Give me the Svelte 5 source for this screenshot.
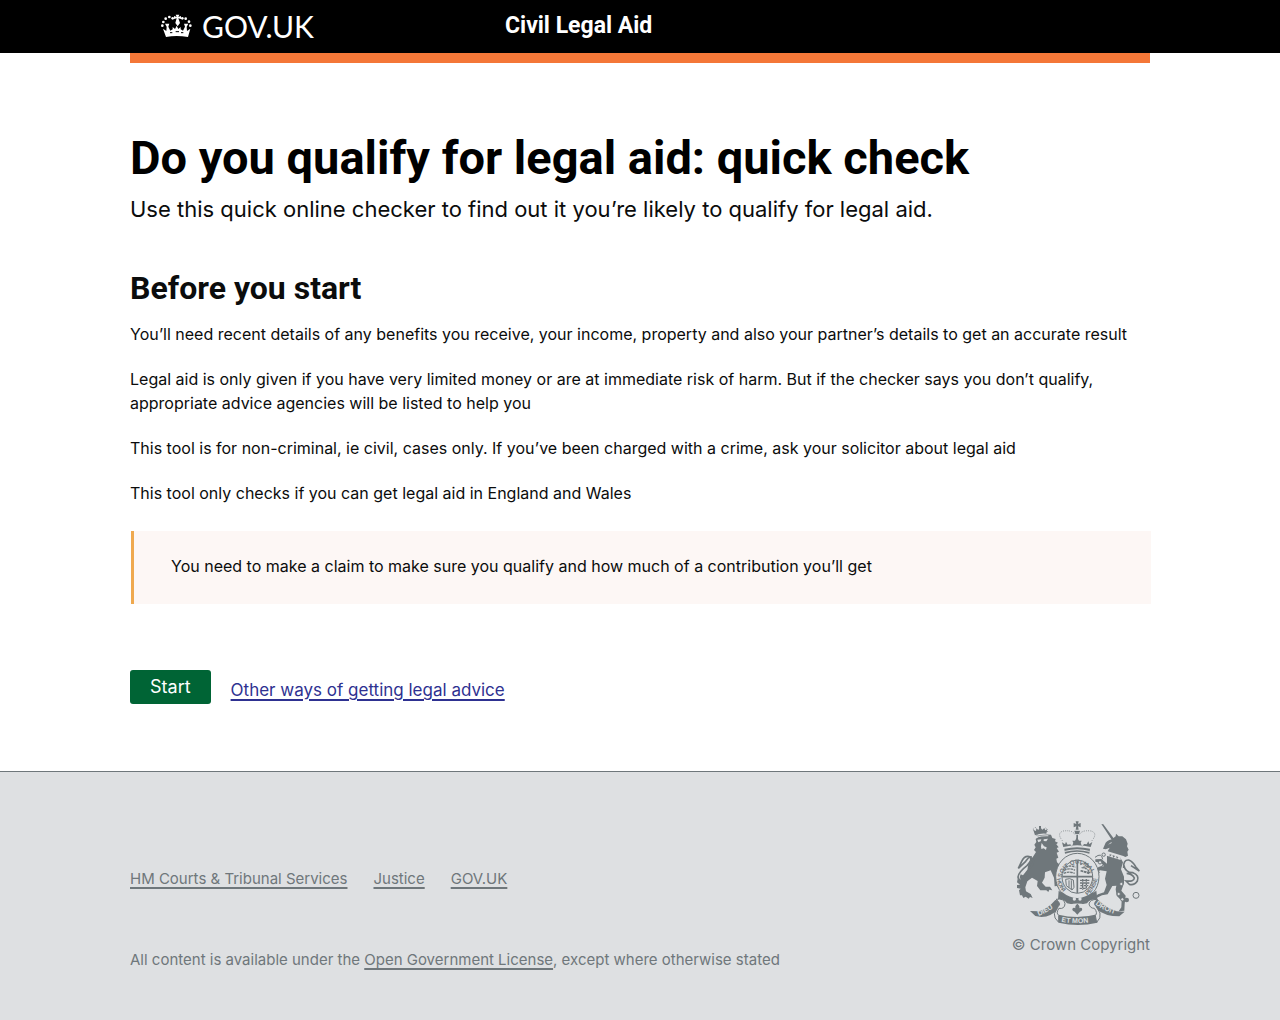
<script lang="ts">
  const details = [
    'You’ll need recent details of any benefits you receive, your income, property and also your partner’s details to get an accurate result',
    'Legal aid is only given if you have very limited money or are at immediate risk of harm. But if the checker says you don’t qualify, appropriate advice agencies will be listed to help you',
    'This tool is for non-criminal, ie civil, cases only. If you’ve been charged with a crime, ask your solicitor about legal aid',
    'This tool only checks if you can get legal aid in England and Wales',
  ];
  const footerLinks = ['HM Courts & Tribunal Services', 'Justice', 'GOV.UK'];
</script>

<header class="top">
  <div class="wrap top-inner">
    <a class="brand" href="#home">
      <svg class="crown" viewBox="33 42 93 69" aria-hidden="true">
        <g fill="currentColor">
          <path d="M77 44h11l-3 7 8-3v9l-8-2 5 14-7 10-7-10 4-14-8 2v-9l8 3z" />
          <circle cx="68" cy="55" r="4" /><circle cx="58" cy="51" r="4" /><circle cx="47" cy="56" r="4" /><circle cx="40" cy="66" r="4" /><circle cx="37" cy="77" r="4" />
          <circle cx="97" cy="55" r="4" /><circle cx="107" cy="56" r="4" /><circle cx="117" cy="65" r="4" /><circle cx="121" cy="77" r="4" />
          <path d="M39 86l10 7 1-13-5-9h13l-3 9 6 12 7-4v-7l7 6 5-10 5 10 7-6v7l7 4 6-12-3-9h13l-5 9 1 13 10-7-7 25q-35-6-66 0z" />
        </g>
        <path d="M60 98h7m26 0h7M77 95h10" fill="none" stroke="#000" stroke-width="3" />
      </svg>
      <span>GOV.UK</span>
    </a>
    <a class="service" href="#service">Civil Legal Aid</a>
  </div>
</header>
<div class="wrap"><div class="stripe"></div></div>

<main class="wrap">
  <h1>Do you qualify for legal aid: quick check</h1>
  <p class="lede">Use this quick online checker to find out it you’re likely to qualify for legal aid.</p>
  <h2>Before you start</h2>
  {#each details as text}
    <p>{text}</p>
  {/each}
  <aside>You need to make a claim to make sure you qualify and how much of a contribution you’ll get</aside>
  <div class="actions">
    <button type="button">Start</button>
    <a href="#advice">Other ways of getting legal advice</a>
  </div>
</main>

<footer>
  <div class="wrap foot">
    <div class="foot-text">
      <nav>
        {#each footerLinks as label}
          <a href="#footer">{label}</a>
        {/each}
      </nav>
      <p class="licence">All content is available under the <a href="#licence">Open Government License</a>, except where otherwise stated</p>
    </div>
    <div class="copyright">
      <svg class="arms" viewBox="48 33 372 312" aria-hidden="true">
        <defs>
          <path id="garter-top" d="M185 203A48 52 0 0 1 279 203" />
          <path id="garter-left" d="M170 206Q176 244 216 264" />
          <path id="garter-right" d="M262 258Q291 234 295 188" />
          <path id="scroll-left" d="M116 318Q146 306 178 280" />
          <path id="scroll-right" d="M286 283Q314 306 364 318" />
          <path id="scroll-mid" d="M184 335Q232 345 290 333" />
        </defs>
        <g fill="currentColor">
          <!-- royal crown -->
          <path d="M227 34h9l-2 8 8-3v13l-8-3 2 10h-9l2-10-8 3V39l8 3zM223 62h17l-3 10h-11zM229 74h5v19h-5z" />
          <path d="M190 112l-4-15 9 6 3-8 5 9 8-1 5 7 4-12-3-6h8l6-10 6 10h8l-3 6 4 12 6-8 8 1 5-9 3 8 9-6-5 15q-40-10-82 0zM193 116q38-9 77 0l-2 15q-36-12-73 0z" />
          <!-- lion -->
          <path d="M109 78q20-6 44-4l4 10 10 3-2 7 9 4-5 5 7 9-6 2 7 11-7 3 5 15-6 3 2 11 9 8 5 25-5 18 5 20-8 8-6-8-7 1-2-26-10-22-17 6-1 16-8 15 11 12 13 0 7 11-9-2-3 7-6-5-18 0-10-13 2-15-17-10-14 11-6 18 2 12 14 8 6 12-8-3-4 5-9-6-7 4-4-8-6 0-3-15 5-5-11-2 0-9 9-1-9-7 2-10 10 4-4-9 3-9 7 3 13-17 4-21 12-16 10-16-6-6 5-8-4-8 6-8-2-9 7-5-4-8 6-6z" />
          <path d="M100 60l8 3 1-8 6 5 5-9 7 8 6-5 3 7 6-3-3 13q-18-2-34 5zM117 48h6v7h-6z" />
          <!-- unicorn -->
          <path d="M304 42l6 1 32 43-6 5zM314 105q4-14 22-17l11-9 1-8 8 8 11 0 11 9 5 13-2 8 5 10-4 6 2 12-8 4-6-3-47-14 6-11-12 5-8-2z" />
          <path d="M321 130l40 13 8 14-6 21 9 22 0 20-8 22 13 15-3 25-1 20-17 2 8-12 1-20-15-15-3-19 2-11-12 1-14 25-17 3-15 7-8 15-11-2 10-13 12-10 18-6 8-22-5-19 5-22-20-3-10 8-8-6 15-13 15-1-9-11-17-3 0-7 18-1 17 14z" />
          <circle cx="380" cy="270" r="7" />
          <!-- ribbon bands -->
          <path d="M90 303l26 1q28-8 50-34l18 3-4 20q-26 27-56 28l-18-3zM374 305l-24-1q-30-9-58-36l-14 4-4 12q26 28 64 34l20 1z" />
          <path d="M176 314q56 15 116-1v25q-58 14-116 0z" />
          <path d="M176 242q57 44 113 0l3 26q-22-2-31 12-30 8-60 0-9-13-27-12z" />
        </g>
        <g fill="none" stroke="currentColor" stroke-width="5">
          <path d="M74 214q-20-2-20-13 2-15 27-34 19-19 7-27-14-4-23 14l-10 21 22-21q12-17 18-13M71 214q4-20 22-42 16-24-5-32M371 164q5 25 28 24 20 8 13 25-9 14-24 10l-10-10q24 3 25-9-6-13-23-14M371 174q-2-25 15-24 12 4 21 20l11 13-25-16" />
          <path d="M285 142q20-16 23 6M309 166l-18 12 8 10" stroke-width="3" />
          <path d="M187 92q-18-23 3-29 29-4 36 13M276 92q18-23-3-29-29-4-36 13" stroke-width="3" stroke-dasharray="2 4" />
          <path d="M101 61q-4-10 11-8M137 54q8 4 4 14" stroke-width="3" stroke-dasharray="2 4" />
        </g>
        <g class="paper" stroke="currentColor" stroke-width="3">
          <ellipse cx="232" cy="200" rx="65" ry="70" />
          <ellipse cx="232" cy="200" rx="46" ry="50" />
          <path d="M168 268q25-4 27 13-1 17-18 14-10 13-1 21v21q-15-13-13-26l12-22q10-8-7-21zM292 268q-23 0-25 14 3 13 16 13 11 13 3 22l4 20q14-13 10-28l-12-20q-10-8 4-21z" />
          <circle cx="408" cy="256" r="9" /><circle cx="356" cy="252" r="5" /><circle cx="367" cy="268" r="5" /><circle cx="311" cy="134" r="5" /><circle cx="300" cy="157" r="5" /><circle cx="364" cy="222" r="5" />
        </g>
        <path d="M186 246q46 36 92 0l3 12q-48 30-98 0z" fill="currentColor" />
        <g class="paper">
          <path d="M207 284q25-7 50 0v31q-25 5-50 0z" />
          <circle cx="223" cy="267" r="5" /><circle cx="240" cy="267" r="5" />
          <path d="M112 89l12-1-2 6-7 3zM131 88l13-2-5 8-8-1zM125 99l7 10 8 3-2 8-7-5-7 2-1-8zM109 80q20-5 36-4v3q-18-1-36 4z" />
          <path d="M193 123q39-11 76 0v3q-38-10-76 0zM324 104l10-8 1 3zM322 127l7 4 0 9 8-7 3 11 7-8 4 11 6-8 5 5 0 6-42-13z" />
        </g>
        <path d="M229 300q-8-10 3-19 11 9 4 19 2-9 9-6 5 7-5 11l-8 9-8-9q-11-4-5-11 7-3 10 6z" fill="currentColor" />
        <g fill="none" stroke="currentColor">
          <path d="M232 151v98M187 200h91" stroke-width="5" />
          <path d="M196 172q14-8 30 0M192 181q16-9 33 0M191 190q16-7 33 0M241 164q17-12 25 5l-21 4q17 0 24 14l-28-5 27 9M240 211h30M240 219h29M241 227h24M239 235h21M248 207v32M259 207v31" stroke-width="4" stroke-dasharray="8 2" />
          <path d="M197 208q12-5 23 2l2 22-6 8-17-13zM207 211v22M214 211v26" stroke-width="3" />
        </g>
        <g class="motto" fill="currentColor">
          <text><textPath href="#garter-top">SOIT QUI MAL</textPath></text>
          <text><textPath href="#garter-left">HONI</textPath></text>
          <text><textPath href="#garter-right">PENSE</textPath></text>
        </g>
        <g class="motto ribbon paper">
          <text><textPath href="#scroll-left">DIEU</textPath></text>
          <text><textPath href="#scroll-mid">ET MON</textPath></text>
          <text><textPath href="#scroll-right">DROIT</textPath></text>
        </g>
      </svg>
      <span>© Crown Copyright</span>
    </div>
  </div>
</footer>

<style>
  :global(body) {
    margin: 0;
    background: #fff;
    color: #0b0c0c;
    font-family: Inter, 'Liberation Sans', sans-serif;
  }
  :global(#app) {
    display: flex;
    flex-direction: column;
    min-height: 100vh;
  }
  .wrap {
    box-sizing: border-box;
    width: 100%;
    max-width: 1020px;
    margin: 0 auto;
  }
  .top { background: #000; }
  .top-inner {
    display: grid;
    grid-template-columns: 344px 1fr;
    align-items: center;
    height: 53px;
    padding: 0 0 2px 31px;
    box-sizing: border-box;
  }
  .top a { color: #fff; text-decoration: none; }
  .brand {
    display: flex;
    align-items: center;
    gap: 10px;
    font: 30px/36px Lato, sans-serif;
  }
  .crown { width: 31px; height: 23px; }
  h1, h2, .service { font-family: Roboto, 'Liberation Sans', sans-serif; font-weight: 700; }
  .service { font-size: 23px; line-height: 30px; }
  .stripe { height: 10px; background: #f47738; }
  main { padding: 67px 0; }
  h1 { margin: 0; font-size: 47px; line-height: 56px; color: #000; }
  p { margin: 0 0 21px; font-size: 16px; line-height: 24px; }
  .lede { margin: 8px 0 0; font-size: 22px; line-height: 30px; }
  h2 { margin: 44px 0 14px; font-size: 32px; line-height: 40px; }
  aside {
    margin: 26px -1px 0 1px;
    padding: 23px 37px 26px;
    border-left: 3px solid #efa94f;
    background: #fdf7f5;
    font-size: 16px;
    line-height: 24px;
  }
  .actions { display: flex; align-items: center; gap: 20px; margin-top: 66px; }
  button {
    padding: 5px 20px;
    border: 0;
    border-radius: 3px;
    background: #006435;
    color: #fff;
    font: inherit;
    font-size: 18px;
    line-height: 24px;
  }
  .actions a { padding-top: 6px; color: #2e3191; font-size: 17px; line-height: 24px; }
  a { text-decoration-thickness: 2px; text-underline-offset: 3px; }
  footer {
    flex: 1;
    border-top: 1px solid #6f777b;
    background: #dee0e2;
    color: #6f777b;
    font-size: 15px;
    line-height: 24px;
  }
  footer a { color: inherit; }
  .foot { display: flex; justify-content: space-between; padding: 49px 0 46px; }
  .foot-text { padding-top: 46px; }
  nav { display: flex; gap: 26px; }
  .licence { margin: 57px 0 0; font-size: 15px; }
  .copyright { display: flex; flex-direction: column; align-items: flex-end; gap: 8px; }
  .arms { width: 124px; height: 104px; margin-right: 10px; color: #6f777b; }
  .paper { fill: #dee0e2; }
  .motto { font: 700 18px 'Liberation Sans', sans-serif; }
  .ribbon { font-size: 21px; }
</style>
